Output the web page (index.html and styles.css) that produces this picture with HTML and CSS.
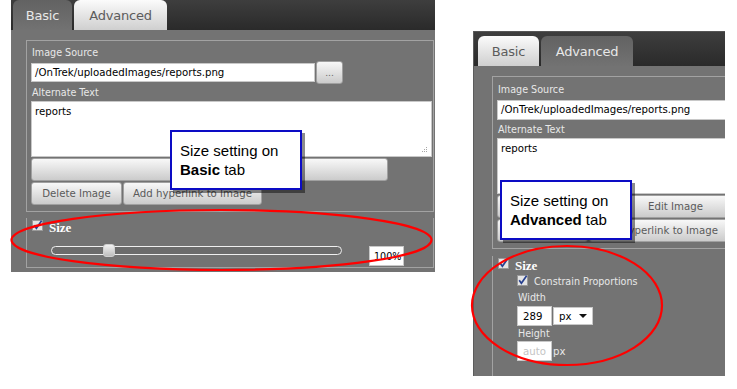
FILE: index.html
```html
<!DOCTYPE html>
<html>
<head>
<meta charset="utf-8">
<link rel="stylesheet" href="styles.css">
</head>
<body>
<div class="stage">
  <section class="panel panel-a">
    <div class="tabbar">
      <div class="tab tab-basic active">Basic</div>
      <div class="tab tab-adv">Advanced</div>
    </div>
    <div class="pbody">
      <div class="group main">
        <div class="label">Image Source</div>
        <div class="src-row">
          <div class="input src">/OnTrek/uploadedImages/reports.png</div>
          <div class="btn browse">...</div>
        </div>
        <div class="label">Alternate Text</div>
        <div class="textarea">
          <span>reports</span>
          <svg class="grip" width="7" height="7" viewBox="0 0 7 7"><g fill="#a8a8a8"><rect x="5" y="0" width="1" height="1"/><rect x="3" y="2" width="1" height="1"/><rect x="5" y="2" width="1" height="1"/><rect x="1" y="4" width="1" height="1"/><rect x="3" y="4" width="1" height="1"/><rect x="5" y="4" width="1" height="1"/></g></svg>
        </div>
        <div class="btn wide"></div>
        <div class="btn-row">
          <div class="btn del">Delete Image</div>
          <div class="btn link">Add hyperlink to Image</div>
        </div>
      </div>
      <div class="group size">
        <div class="size-head">
          <svg class="cb" width="11" height="11" viewBox="0 0 11 11"><rect x="0.5" y="0.5" width="10" height="10" fill="#e4e4e4" stroke="#9a9a9a"/><path d="M2.2 5.2 L4.4 8.2 L9.6 0.8" fill="none" stroke="#27408f" stroke-width="1.7"/></svg>
          <span class="size-title">Size</span>
        </div>
        <div class="slider-row">
          <div class="track"><div class="thumb"></div></div>
          <div class="input pct">100%</div>
        </div>
      </div>
    </div>
  </section>

  <section class="panel panel-b">
    <div class="tabbar">
      <div class="tab tab-basic">Basic</div>
      <div class="tab tab-adv active">Advanced</div>
    </div>
    <div class="pbody">
      <div class="group main">
        <div class="label">Image Source</div>
        <div class="src-row">
          <div class="input src">/OnTrek/uploadedImages/reports.png</div>
        </div>
        <div class="label">Alternate Text</div>
        <div class="textarea">
          <span>reports</span>
        </div>
        <div class="btn wide">Edit Image</div>
        <div class="btn-row">
          <div class="btn del"></div>
          <div class="btn link">Add hyperlink to Image</div>
        </div>
      </div>
      <div class="group size">
        <div class="size-head">
          <svg class="cb" width="11" height="11" viewBox="0 0 11 11"><rect x="0.5" y="0.5" width="10" height="10" fill="#e4e4e4" stroke="#9a9a9a"/><path d="M2.2 5.2 L4.4 8.2 L9.6 0.8" fill="none" stroke="#27408f" stroke-width="1.7"/></svg>
          <span class="size-title">Size</span>
        </div>
        <div class="adv-size">
          <div class="constrain">
            <svg class="cb" width="11" height="11" viewBox="0 0 11 11"><rect x="0.5" y="0.5" width="10" height="10" fill="#e4e4e4" stroke="#9a9a9a"/><path d="M2.2 5.2 L4.4 8.2 L9.6 0.8" fill="none" stroke="#27408f" stroke-width="1.7"/></svg>
            <span>Constrain Proportions</span>
          </div>
          <div class="label sub">Width</div>
          <div class="dim-row">
            <div class="input dim">289</div>
            <div class="select"><span>px</span><span class="caret"></span></div>
          </div>
          <div class="label sub h">Height</div>
          <div class="dim-row h">
            <div class="input dim ph">auto</div>
            <span class="unit">px</span>
          </div>
        </div>
      </div>
    </div>
  </section>
</div>

<svg class="marks" width="737" height="389" viewBox="0 0 737 389">
  <ellipse cx="221.5" cy="240" rx="210" ry="30" fill="none" stroke="#f00" stroke-width="2.2"/>
  <ellipse cx="567" cy="305.5" rx="95" ry="59.5" fill="none" stroke="#f00" stroke-width="2.2"/>
</svg>

<div class="callout callout-a">Size setting on<br><b>Basic</b> tab</div>
<div class="callout callout-b">Size setting on<br><b>Advanced</b> tab</div>
</body>
</html>
```

FILE: styles.css
```css
* { box-sizing: border-box; }
html, body { margin: 0; padding: 0; background: #fff; }
body {
  width: 737px; height: 389px; overflow: hidden; position: relative;
  font-family: "DejaVu Sans", sans-serif;
}
.stage { display: flex; align-items: flex-start; padding-left: 11px; gap: 38px; }

.panel { background: #737373; overflow: hidden; display: flex; flex-direction: column; flex: none; }
.panel-a { width: 424px; height: 272px; }
.panel-b { width: 252px; height: 345px; margin-top: 31px; border-left: 1px solid #5c5c5c; }

.tabbar {
  flex: none; display: flex; align-items: flex-end; gap: 2px;
  background: linear-gradient(#3e3e3e, #2a2a2a);
}
.panel-a .tabbar { height: 30px; padding-left: 2px; }
.panel-b .tabbar { height: 35px; padding-left: 4px; border-top: 1px solid #555; }

.tab {
  height: 30px; border-radius: 6px 6px 0 0;
  display: flex; align-items: center; justify-content: center;
  font-size: 13px; color: #5c5c5c; letter-spacing: -0.2px;
  background: linear-gradient(#fbfbfb, #cfcfcf);
}
.tab.active { background: linear-gradient(#626262, #727272); color: #e8e8e8; }
.panel-a .tab-basic { width: 59px; }
.panel-a .tab-adv { width: 93px; }
.panel-b .tab-basic { width: 61px; }
.panel-b .tab-adv { width: 92px; }

.pbody { flex: 1; padding: 10px 1px 0 15px; }
.panel-b .pbody { padding: 10px 0 0 18px; }
.panel-b .group { width: 420px; }

.group { border: 1px solid #a2a2a2; padding-left: 4px; }
.group.main { padding-top: 6px; padding-bottom: 6px; }
.panel-b .group.main { padding-top: 7px; }
.group.size { border-top: none; padding-bottom: 1px; }

.label {
  font-size: 9.6px; line-height: 12px; color: #e8e8e8; margin-left: 1px;
}
.src-row { display: flex; align-items: center; gap: 1px; margin-top: 2px; height: 23px; }
.input {
  background: #fff; border: 1px solid #c8c8c8; color: #000;
  font-size: 10.2px; display: flex; align-items: center; padding: 0 3px; white-space: nowrap;
}
.input.src { width: 284px; height: 19px; }
.panel-b .input.src { height: 20px; }

.btn {
  background: linear-gradient(#f8f8f8, #cbcbcb);
  border: 1px solid #a0a0a0; border-radius: 3px;
  height: 23px; font-size: 10.2px; color: #5a5a5a;
  display: flex; align-items: center; justify-content: center; white-space: nowrap; flex: none;
}
.btn.browse { width: 27px; color: #666; font-size: 9px; }
.src-row + .label { margin-top: 3px; }

.textarea {
  margin-top: 2px; width: 401px; height: 56px; background: #fff; border: 1px solid #c8c8c8;
  font-size: 10.2px; color: #000; padding: 4px 3px 2px;
  display: flex; flex-direction: column;
}
.textarea .grip { margin-top: auto; align-self: flex-end; }
.btn.wide { margin-top: 1px; width: 357px; }
.btn-row { display: flex; gap: 1px; margin-top: 1px; }
.btn.del { width: 91px; }
.btn.link { width: 139px; }

.size-head { display: flex; align-items: center; gap: 6px; height: 15px; margin-top: 6px; padding-left: 1px; }
.panel-b .size-head { margin-top: 7px; }
.size-title {
  font-family: "Liberation Serif", serif; font-weight: bold; font-size: 13px;
  color: #fff; padding-top: 4px;
}
.cb { flex: none; display: block; }

.slider-row { display: flex; align-items: flex-start; margin-top: 11px; height: 22px; }
.track {
  margin-top: 2px; margin-left: 20px; width: 291px; height: 9px;
  border: 1px solid #efefef; border-radius: 5px; background: #6c6c6c;
  display: flex; align-items: center;
}
.thumb {
  flex: none; width: 12px; height: 13px; margin-left: 51px; border-radius: 3px;
  background: linear-gradient(#f2f2f2, #bdbdbd); border: 1px solid #cfcfcf;
}
.input.pct { margin-top: 2px; margin-left: 27px; width: 35px; height: 20px; font-size: 9.6px; padding-left: 4px; }

.adv-size { padding-left: 20px; padding-bottom: 16px; }
.constrain { display: flex; align-items: center; gap: 6px; margin-top: 3px; height: 13px; }
.constrain span { font-size: 9.6px; color: #e8e8e8; padding-top: 2px; }
.label.sub { margin-top: 5px; }
.label.sub.h { margin-top: 2px; }
.dim-row { display: flex; align-items: center; gap: 1px; margin-top: 2px; height: 20px; }
.dim-row.h { margin-top: 1px; }
.input.dim { width: 35px; height: 20px; font-size: 10.2px; padding-left: 5px; }
.input.ph { color: #c4c4c4; }
.select {
  width: 40px; height: 18px; background: #fff; border: 1px solid #c8c8c8;
  display: flex; align-items: center; justify-content: space-between;
  padding: 0 5px 0 5px; font-size: 10.2px; color: #000;
}
.caret { width: 0; height: 0; border-left: 4px solid transparent; border-right: 4px solid transparent; border-top: 4px solid #111; }
.unit { font-size: 10.2px; color: #e8e8e8; }

.marks { position: absolute; left: 0; top: 0; pointer-events: none; }

.callout {
  position: absolute; width: 132px; height: 60px;
  background: #fff; border: 2px solid #0c0cc4;
  box-shadow: 3px 3px 0 rgba(0,0,0,0.45);
  font-family: "Liberation Sans", Arial, sans-serif; font-size: 15px; line-height: 19px;
  color: #000; padding: 9px 6px 0 8px;
}
.callout-a { left: 170px; top: 130px; }
.callout-b { left: 500px; top: 180px; }
```
